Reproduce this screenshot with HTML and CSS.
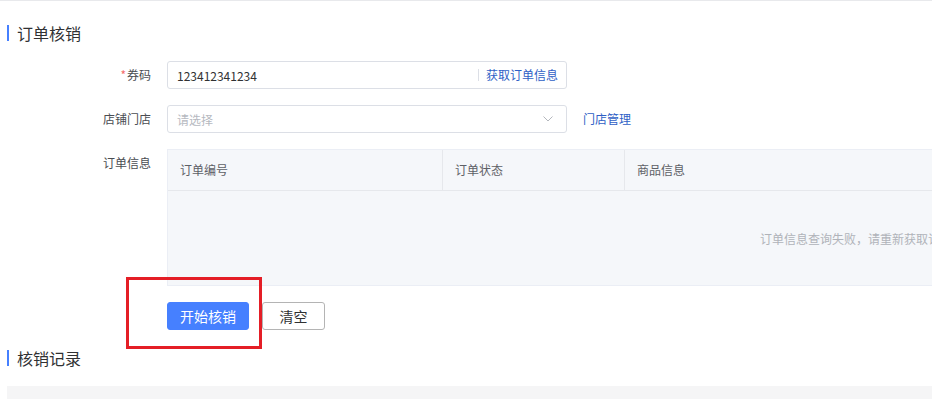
FILE: index.html
```html
<!DOCTYPE html>
<html lang="zh-CN">
<head>
<meta charset="utf-8">
<title>订单核销</title>
<link rel="stylesheet" href="styles.css">
</head>
<body>
<div class="page">
  <div class="topline"></div>
  <div class="content">
    <h2 class="section-title">订单核销</h2>
    <div class="form">
      <div class="form-item">
        <label class="form-label"><span class="req">*</span>券码</label>
        <div class="input">
          <span class="input-value">123412341234</span>
          <span class="input-suffix">获取订单信息</span>
        </div>
      </div>
      <div class="form-item">
        <label class="form-label">店铺门店</label>
        <div class="input select">
          <span class="placeholder">请选择</span>
          <svg class="chevron" width="10" height="6" viewBox="0 0 10 6"><path d="M0.5 0.5 L5 5 L9.5 0.5" fill="none" stroke="#b4b7bd" stroke-width="1"/></svg>
        </div>
        <a class="link">门店管理</a>
      </div>
      <div class="form-item">
        <label class="form-label">订单信息</label>
        <div class="table">
          <div class="thead">
            <div class="th col1">订单编号</div>
            <div class="th col2">订单状态</div>
            <div class="th col3">商品信息</div>
          </div>
          <div class="tbody">订单信息查询失败，请重新获取订单信息</div>
        </div>
      </div>
      <div class="actions">
        <button class="btn btn-primary">开始核销</button>
        <button class="btn btn-default">清空</button>
      </div>
    </div>
    <h2 class="section-title second">核销记录</h2>
    <div class="records"></div>
  </div>
  <div class="annotation"></div>
</div>
</body>
</html>
```
FILE: styles.css
```css
html, body {
  margin: 0;
  padding: 0;
  background: #ffffff;
  overflow: hidden;
  width: 932px;
  height: 399px;
}
.page {
  position: relative;
  width: 932px;
  height: 399px;
  overflow: hidden;
  font-family: "Noto Sans CJK SC", "Noto Sans", sans-serif;
  color: #303133;
}
.topline {
  height: 1px;
  background: #e8e9ec;
}
.content {
  padding-left: 7px;
}
.section-title {
  margin: 24px 0 0 0;
  height: 16px;
  border-left: 2px solid #4680ff;
  padding-left: 8px;
  font-size: 16px;
  line-height: 16px;
  font-weight: normal;
  color: #303133;
  display: flex;
  align-items: center;
}
.section-title.second {
  margin-top: 20px;
}
.form {
  margin-top: 20px;
}
.form-item {
  display: flex;
  align-items: flex-start;
  margin-bottom: 16px;
}
.form-label {
  width: 144px;
  padding-right: 16px;
  text-align: right;
  font-size: 12px;
  line-height: 28px;
  color: #4a4d52;
  flex: none;
}
.req {
  color: #f56c6c;
  margin-right: 1px;
}
.input {
  width: 400px;
  height: 28px;
  box-sizing: border-box;
  border: 1px solid #dcdfe6;
  border-radius: 3px;
  display: flex;
  align-items: center;
  padding: 0 8px 0 9px;
  font-size: 12px;
  flex: none;
}
.input-value {
  flex: 1;
  color: #303133;
}
.input-suffix {
  color: #2f5fc6;
  border-left: 1px solid #dcdfe6;
  padding-left: 7px;
  line-height: 12px;
}
.placeholder {
  flex: 1;
  color: #b6b9bf;
}
.chevron {
  margin-right: 5px;
  display: block;
}
.link {
  margin-left: 16px;
  font-size: 12px;
  line-height: 28px;
  color: #2f5fc6;
  cursor: pointer;
}
.table {
  width: 1402px;
  flex: none;
  border: 1px solid #ebeef5;
  background: #f5f7fa;
  box-sizing: border-box;
}
.thead {
  display: flex;
  height: 41px;
  border-bottom: 1px solid #e6e8ec;
  box-sizing: border-box;
}
.th {
  font-size: 12px;
  color: #5d6066;
  line-height: 40px;
  padding-left: 12px;
  box-sizing: border-box;
}
.col1 {
  width: 275px;
  border-right: 1px solid #e6e8ec;
}
.col2 {
  width: 182px;
  border-right: 1px solid #e6e8ec;
}
.col3 {
  flex: 1;
}
.tbody {
  height: 94px;
  display: flex;
  align-items: center;
  justify-content: center;
  font-size: 12px;
  color: #b0b3b9;
}
.actions {
  display: flex;
  gap: 13px;
  padding-left: 160px;
}
.btn {
  height: 28px;
  box-sizing: border-box;
  border-radius: 3px;
  font-family: "Noto Sans CJK SC", "Noto Sans", sans-serif;
  font-size: 14px;
  line-height: 26px;
  padding: 0;
  cursor: pointer;
}
.btn-primary {
  width: 82px;
  background: #4680ff;
  border: 1px solid #4680ff;
  color: #ffffff;
}
.btn-default {
  width: 63px;
  background: #ffffff;
  border: 1px solid #b4b4b4;
  color: #303133;
}
.records {
  margin-top: 20px;
  height: 40px;
  background: #f5f5f6;
}
.annotation {
  position: absolute;
  left: 126px;
  top: 277px;
  width: 136px;
  height: 72px;
  box-sizing: border-box;
  border: 3px solid #e41e26;
}
```
